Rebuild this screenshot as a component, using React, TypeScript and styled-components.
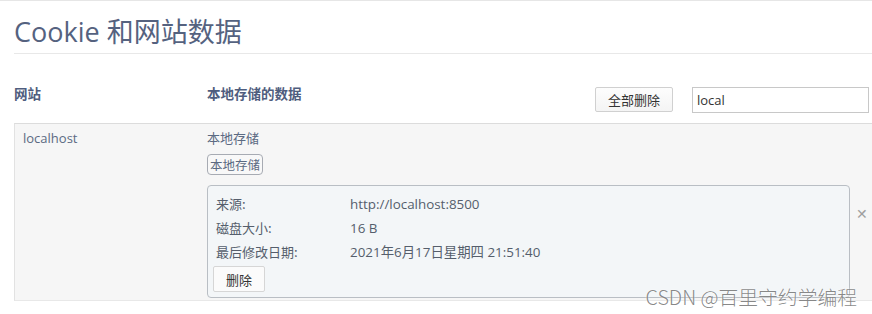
import React from "react";
import styled, { createGlobalStyle } from "styled-components";

const Global = createGlobalStyle`
  html, body { margin: 0; padding: 0; background: #fff; }
  body { font-family: "Open Sans", "Noto Sans CJK SC", sans-serif; overflow: hidden; }
  * { box-sizing: border-box; }
`;

const Page = styled.div`
  width: 872px;
  height: 314px;
  border-top: 1px solid #e6e6e6;
  position: relative;
  overflow: hidden;
`;

const TitleBar = styled.div`
  margin-left: 14px;
  height: 53px;
  border-bottom: 1px solid #e8e8e8;
  display: flex;
  align-items: flex-end;
  padding-bottom: 3px;
`;

const Title = styled.h1`
  margin: 0;
  font-weight: 400;
  font-size: 27px;
  line-height: 36px;
  color: #55627f;
  font-family: "Open Sans", "Noto Sans CJK SC", sans-serif;
`;

const HeaderRow = styled.div`
  display: flex;
  align-items: flex-start;
  height: 69px;
  padding-left: 14px;
`;

const HeadCell = styled.div<{ $w?: number }>`
  width: ${(p) => (p.$w ? `${p.$w}px` : "auto")};
  margin-top: 29px;
  font-weight: 700;
  font-size: 13.5px;
  line-height: 20px;
  color: #4f5d7e;
  font-family: "Noto Sans CJK SC", sans-serif;
`;

const Spacer = styled.div`
  flex: 1;
`;

const Button = styled.button`
  font-family: "Noto Sans CJK SC", sans-serif;
  font-size: 13px;
  color: #333;
  background: linear-gradient(#fdfdfd, #f4f4f4);
  border: 1px solid #d0d0d0;
  border-radius: 2px;
  padding: 0;
  cursor: pointer;
`;

const DeleteAll = styled(Button)`
  margin-top: 33px;
  width: 78px;
  height: 25px;
  margin-right: 19px;
`;

const Search = styled.input`
  margin-top: 33px;
  width: 177px;
  height: 26px;
  margin-right: 3px;
  border: 1px solid #c8c8c8;
  padding: 0 4px;
  font-family: "Open Sans", sans-serif;
  font-size: 13px;
  color: #333;
  outline: none;
`;

const Table = styled.div`
  margin-left: 14px;
  width: 880px;
  height: 178px;
  background: #f6f6f6;
  border-top: 1px solid #dcdcdc;
  border-left: 1px solid #e2e2e2;
  border-bottom: 1px solid #e8e8e8;
  display: flex;
`;

const SiteCell = styled.div`
  width: 192px;
  padding: 5px 0 0 8px;
  font-size: 13px;
  color: #5b6a82;
  line-height: 18px;
`;

const DataCell = styled.div`
  width: 643px;
  padding-top: 5px;
  display: flex;
  flex-direction: column;
  align-items: flex-start;
`;

const Kind = styled.div`
  font-family: "Noto Sans CJK SC", sans-serif;
  font-size: 13px;
  line-height: 18px;
  color: #5b6a82;
`;

const Chip = styled.span`
  display: block;
  margin-top: 7px;
  height: 21px;
  font-family: "Noto Sans CJK SC", sans-serif;
  font-size: 12.5px;
  line-height: 19px;
  color: #5b6a82;
  border: 1px solid #a7abb3;
  border-radius: 4px;
  padding: 0 2px;
  background: #f8f8f8;
`;

const Details = styled.div`
  margin-top: 10px;
  width: 643px;
  height: 113px;
  background: #f3f6f8;
  border: 1px solid #b9bec4;
  border-radius: 4px;
  padding: 6px 0 0 8px;
`;

const InfoGrid = styled.div`
  display: grid;
  grid-template-columns: 134px 1fr;
`;

const Label = styled.div`
  font-family: "Noto Sans CJK SC", sans-serif;
  font-size: 13px;
  line-height: 24px;
  color: #555e6c;
`;

const Value = styled.div`
  font-family: "Open Sans", "Noto Sans CJK SC", sans-serif;
  font-size: 13.4px;
  line-height: 24px;
  color: #555e6c;
`;

const DeleteBtn = styled(Button)`
  display: block;
  margin-top: 2px;
  margin-left: -3px;
  width: 52px;
  height: 26px;
  background: #fbfbfb;
  border-color: #d6d6d6;
`;

const RemoveCell = styled.div`
  align-self: center;
  padding: 0 0 0 6px;
  margin-top: 3px;
  color: #a0a0a0;
  font-size: 14px;
  font-weight: 700;
  font-family: "DejaVu Sans", sans-serif;
`;

const Watermark = styled.div`
  position: absolute;
  right: 15px;
  top: 283px;
  font-family: "Noto Sans CJK SC", sans-serif;
  font-size: 19.8px;
  line-height: 26px;
  font-weight: 300;
  color: rgba(115, 115, 115, 0.85);
  text-shadow: 0 0 2px #fff;
`;

export default function App() {
  return (
    <>
      <Global />
      <Page>
        <TitleBar>
          <Title>Cookie 和网站数据</Title>
        </TitleBar>
        <HeaderRow>
          <HeadCell $w={193}>网站</HeadCell>
          <HeadCell>本地存储的数据</HeadCell>
          <Spacer />
          <DeleteAll>全部删除</DeleteAll>
          <Search defaultValue="local" />
        </HeaderRow>
        <Table>
          <SiteCell>localhost</SiteCell>
          <DataCell>
            <Kind>本地存储</Kind>
            <Chip>本地存储</Chip>
            <Details>
              <InfoGrid>
                <Label>来源:</Label>
                <Value>http://localhost:8500</Value>
                <Label>磁盘大小:</Label>
                <Value>16 B</Value>
                <Label>最后修改日期:</Label>
                <Value>2021年6月17日星期四 21:51:40</Value>
              </InfoGrid>
              <DeleteBtn>删除</DeleteBtn>
            </Details>
          </DataCell>
          <RemoveCell>✕</RemoveCell>
        </Table>
        <Watermark>CSDN @百里守约学编程</Watermark>
      </Page>
    </>
  );
}
